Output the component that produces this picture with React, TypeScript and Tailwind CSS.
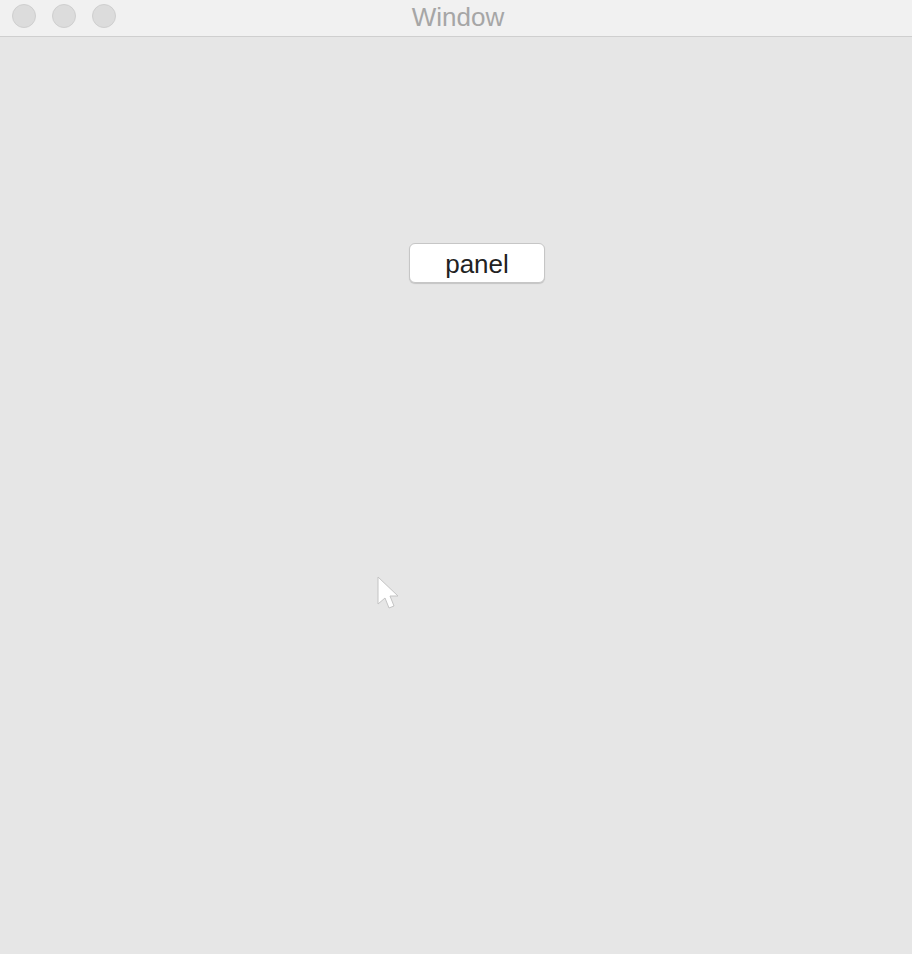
export default function App() {
  return (
    <div className="flex h-[954px] w-[912px] flex-col bg-[#e6e6e6] font-['Helvetica_Neue','Liberation_Sans',Arial,sans-serif]">
      <div className="relative flex h-[37px] shrink-0 items-start border-b border-[#cfcfcf] bg-[#f1f1f1] pt-1">
        <div className="flex gap-4 pl-3">
          <span className="size-6 rounded-full border border-[#cfcfcf] bg-[#dcdcdc]" />
          <span className="size-6 rounded-full border border-[#cfcfcf] bg-[#dcdcdc]" />
          <span className="size-6 rounded-full border border-[#cfcfcf] bg-[#dcdcdc]" />
        </div>
        <p className="absolute inset-x-0 top-[1px] pl-[4px] text-center text-[26px] leading-[32px] text-[#a6a6a6]">Window</p>
      </div>
      <div className="relative flex-1">
        <div className="flex justify-center pt-[206px] pl-[42px]">
          <button className="h-[40px] w-[136px] rounded-[6px] border border-[#c6c6c6] bg-white pt-[2px] text-[26px] leading-none text-[#222] shadow-[0_1px_1px_rgba(0,0,0,0.15)]">
            panel
          </button>
        </div>
        {/* mouse pointer */}
        <svg className="absolute left-[376px] top-[538px]" width="26" height="40" viewBox="0 0 26 40">
          <path
            d="M2 2 L2 29 L9 23 L13 33 L18 31 L14 21 L22 21 Z"
            fill="#ffffff"
            stroke="#c4c4c4"
            strokeWidth="1"
          />
        </svg>
      </div>
    </div>
  );
}
